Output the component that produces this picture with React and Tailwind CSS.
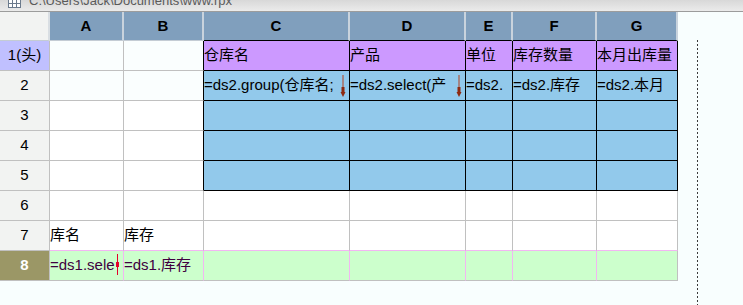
const font = "font-['Liberation_Sans','Noto_Sans_CJK_SC',sans-serif]";

const cols = [
  { key: "A", w: "w-[74px]" },
  { key: "B", w: "w-[80px]" },
  { key: "C", w: "w-[146px]" },
  { key: "D", w: "w-[116px]" },
  { key: "E", w: "w-[47px]" },
  { key: "F", w: "w-[84px]" },
  { key: "G", w: "w-[81px]" },
];

const headBottom = [
  "border-b-[#c4ccd4]",
  "border-b-[#c4ccd4]",
  "border-b-black",
  "border-b-black",
  "border-b-black",
  "border-b-black",
  "border-b-black",
];

const lightAB = "bg-[#fafefe] border-r-[#c0c0c0] border-b-[#c0c0c0]";
const whiteAB = "bg-white border-r-[#c0c0c0] border-b-[#c0c0c0]";
const purple = "bg-[#cc99ff] border-r-black border-b-black";
const blue = "bg-[#92c9eb] border-r-black border-b-black";
const plain = "bg-white border-r-[#c0c0c0] border-b-[#c0c0c0]";
const pinkBottom = "bg-white border-r-[#c0c0c0] border-b-[#f2b6f2]";
const green = "bg-[#ccffcc] border-r-[#f2b6f2] border-b-[#c0c0c0] text-[#400040]";
const greenLast = "bg-[#ccffcc] border-r-[#c0c0c0] border-b-[#c0c0c0] text-[#400040]";

const rows = [
  {
    label: "1(头)",
    head: "bg-[#c0c0ff] text-black",
    cells: [
      [lightAB],
      ["bg-[#fafefe] border-r-black border-b-[#c0c0c0]"],
      [purple, "仓库名"],
      [purple, "产品"],
      [purple, "单位"],
      [purple, "库存数量"],
      [purple, "本月出库量"],
    ],
  },
  {
    label: "2",
    head: "bg-[#f2f3f2] text-black",
    cells: [
      [lightAB],
      ["bg-[#fafefe] border-r-black border-b-[#c0c0c0]"],
      [blue, "=ds2.group(仓库名;", "brown"],
      [blue, "=ds2.select(产", "brown"],
      [blue, "=ds2."],
      [blue, "=ds2.库存"],
      [blue, "=ds2.本月"],
    ],
  },
  ...["3", "4", "5"].map((n) => ({
    label: n,
    head: "bg-[#f2f3f2] text-black",
    cells: [
      [whiteAB],
      ["bg-white border-r-black border-b-[#c0c0c0]"],
      [blue],
      [blue],
      [blue],
      [blue],
      [blue],
    ],
  })),
  {
    label: "6",
    head: "bg-[#f2f3f2] text-black",
    cells: [[plain], [plain], [plain], [plain], [plain], [plain], [plain]],
  },
  {
    label: "7",
    head: "bg-[#f2f3f2] text-black",
    cells: [
      [pinkBottom, "库名"],
      [pinkBottom, "库存"],
      [pinkBottom],
      [pinkBottom],
      [pinkBottom],
      [pinkBottom],
      [pinkBottom],
    ],
  },
  {
    label: "8",
    head: "bg-[#9b9766] text-white font-bold",
    cells: [
      [green, "=ds1.sele", "red"],
      [green, "=ds1.库存"],
      [green],
      [green],
      [green],
      [green],
      [greenLast],
    ],
  },
];

function ExpandArrow({ tone }) {
  if (tone === "red") {
    return (
      <svg width="5" height="22" viewBox="0 0 5 22" className="absolute right-[3px] top-[3px]">
        <line x1="2.5" y1="0" x2="2.5" y2="21" stroke="#e4002b" strokeWidth="1" />
        <rect x="1" y="8" width="3" height="5" fill="#e4002b" />
      </svg>
    );
  }
  return (
    <svg width="6" height="22" viewBox="0 0 6 22" className="absolute right-[3px] top-[4px]">
      <line x1="3" y1="0" x2="3" y2="14" stroke="#b5401e" strokeWidth="1" />
      <rect x="1.5" y="12" width="3" height="6" fill="#8e2a10" />
      <polygon points="0.5,17 5.5,17 3,22" fill="#8e2a10" />
    </svg>
  );
}

function TableIcon() {
  return (
    <svg width="13" height="12" viewBox="0 0 13 12" className="-mt-[4px] shrink-0">
      <rect x="0.5" y="0.5" width="12" height="11" fill="#ffffff" stroke="#6b7a8c" />
      <rect x="1" y="1" width="11" height="3" fill="#8fa8c8" />
      <line x1="0.5" y1="7.5" x2="12.5" y2="7.5" stroke="#6b7a8c" />
      <line x1="4.5" y1="0.5" x2="4.5" y2="11.5" stroke="#6b7a8c" />
      <line x1="8.5" y1="0.5" x2="8.5" y2="11.5" stroke="#6b7a8c" />
    </svg>
  );
}

export default function App() {
  return (
    <div className={`w-[743px] h-[305px] overflow-hidden bg-[#f8fefe] flex flex-col ${font}`}>
      <div className="h-[12px] shrink-0 overflow-hidden flex items-start gap-[8px] pl-[8px] bg-gradient-to-b from-[#d8d8d8] to-[#ebebeb] border-b border-[#9c9c9c]">
        <TableIcon />
        <span className="text-[13px] leading-[13px] -mt-[6px] text-[#5a5a5a] whitespace-nowrap">
          C:\Users\Jack\Documents\www.rpx
        </span>
      </div>

      <div className="flex flex-1 min-h-0">
        <div className="w-[678px] shrink-0 flex flex-col">
          <div className="flex h-[29px] shrink-0">
            <div className="w-[50px] h-full bg-[#f2f3f2] border-r-2 border-b border-r-[#d9dee3] border-b-[#c4ccd4]" />
            {cols.map((c, i) => (
              <div
                key={c.key}
                className={`${c.w} h-full bg-[#809fbd] border-r-2 border-b border-r-[#c9d3dd] ${headBottom[i]} flex items-center justify-center text-[15px] font-bold text-black`}
              >
                {c.key}
              </div>
            ))}
          </div>

          {rows.map((r) => (
            <div key={r.label} className="flex h-[30px] shrink-0">
              <div
                className={`w-[50px] h-full border-r border-b border-r-[#c0c0c0] border-b-[#c0c0c0] flex items-center justify-center text-[15px] ${r.head}`}
              >
                {r.label}
              </div>
              {r.cells.map(([cls, text, arrow], i) => (
                <div
                  key={cols[i].key}
                  className={`${cols[i].w} h-full relative border-r border-b overflow-hidden flex items-center text-[15px] whitespace-nowrap ${cls}`}
                >
                  {text && <span>{text}</span>}
                  {arrow && <ExpandArrow tone={arrow} />}
                </div>
              ))}
            </div>
          ))}
        </div>

        <div className="flex-1 flex pt-[28px] pl-[19px]">
          <div className="w-px h-full bg-[repeating-linear-gradient(to_bottom,#3a3a3a_0px,#3a3a3a_2px,transparent_2px,transparent_4px)]" />
        </div>
      </div>
    </div>
  );
}
